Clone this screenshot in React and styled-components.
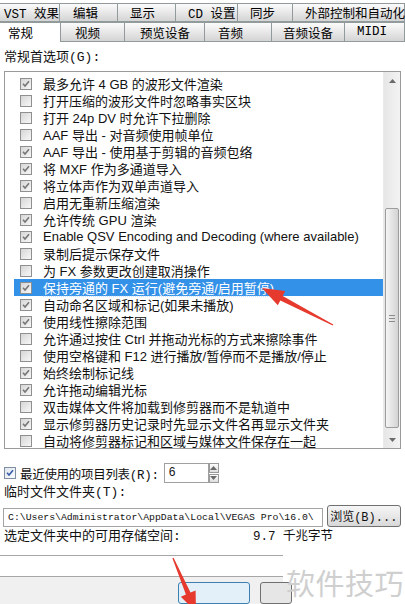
import styled, { createGlobalStyle } from "styled-components";

const GlobalStyle = createGlobalStyle`
  html, body {
    margin: 0;
    padding: 0;
    background: #fff;
  }
`;

const UI_FONT = `"Liberation Mono", "Noto Sans CJK SC", monospace`;
const LIST_FONT = `"Liberation Sans", "Noto Sans CJK SC", sans-serif`;

const backTabs = [
  { label: "VST 效果", w: 60, pad: 4 },
  { label: "编辑", w: 58, pad: 13 },
  { label: "显示", w: 58, pad: 12 },
  { label: "CD 设置", w: 62, pad: 12 },
  { label: "同步", w: 55, pad: 12 },
  { label: "外部控制和自动化", w: 112, pad: 12 },
];

const frontTabs = [
  { label: "常规", w: 61, pad: 8, active: true },
  { label: "视频", w: 64, pad: 14 },
  { label: "预览设备", w: 80, pad: 15 },
  { label: "音频", w: 67, pad: 13 },
  { label: "音频设备", w: 73, pad: 11 },
  { label: "MIDI", w: 60, pad: 12 },
];

const prefs = [
  ["最多允许 4 GB 的波形文件渲染", true],
  ["打开压缩的波形文件时忽略事实区块", false],
  ["打开 24p DV 时允许下拉删除", false],
  ["AAF 导出 - 对音频使用帧单位", false],
  ["AAF 导出 - 使用基于剪辑的音频包络", true],
  ["将 MXF 作为多通道导入", true],
  ["将立体声作为双单声道导入", true],
  ["启用无重新压缩渲染", false],
  ["允许传统 GPU 渲染", true],
  ["Enable QSV Encoding and Decoding (where available)", true],
  ["录制后提示保存文件", false],
  ["为 FX 参数更改创建取消操作", false],
  ["保持旁通的 FX 运行(避免旁通/启用暂停)", true, true],
  ["自动命名区域和标记(如果未播放)", true],
  ["使用线性擦除范围", true],
  ["允许通过按住 Ctrl 并拖动光标的方式来擦除事件", false],
  ["使用空格键和 F12 进行播放/暂停而不是播放/停止", false],
  ["始终绘制标记线", true],
  ["允许拖动编辑光标", true],
  ["双击媒体文件将加载到修剪器而不是轨道中", false],
  ["显示修剪器历史记录时先显示文件名再显示文件夹", true],
  ["自动将修剪器标记和区域与媒体文件保存在一起", false],
];

const Page = styled.div`
  position: relative;
  width: 405px;
  height: 604px;
  overflow: hidden;
  background: #fff;
  font-family: ${UI_FONT};
  font-size: 13px;
  color: #111;
`;

const TabStrip = styled.div`
  padding-top: 3px;
`;

const TabRow = styled.div`
  display: flex;
  height: ${(p) => p.h}px;
`;

const Tab = styled.div`
  box-sizing: border-box;
  width: ${(p) => p.w}px;
  padding-left: ${(p) => p.pad}px;
  display: flex;
  align-items: center;
  font-size: 12.5px;
  white-space: nowrap;
  border: 1px solid #919b9c;
  border-left: none;
  border-bottom: ${(p) => (p.active ? "none" : "1px solid #919b9c")};
  background: ${(p) =>
    p.active ? "#fff" : "linear-gradient(#fbfbfb, #e4e4e4 60%, #d4d4d4)"};
  color: #000;
`;

const Content = styled.div`
  padding: 8px 4px 0 4px;
`;

const Caption = styled.div`
  height: 16px;
  line-height: 16px;
  font-size: 13px;
  margin-bottom: ${(p) => p.mb || 0}px;
  margin-top: ${(p) => p.mt || 0}px;
`;

const ListBox = styled.div`
  box-sizing: border-box;
  display: flex;
  width: 397px;
  height: 378px;
  border: 1px solid #9a9a9a;
  background: #fff;
`;

const ListBody = styled.div`
  flex: 1;
  padding-top: 3px;
  overflow: hidden;
`;

const Row = styled.div`
  display: flex;
  align-items: center;
  height: 17px;
  margin-left: 9px;
  padding-left: 6px;
  font-family: ${LIST_FONT};
  font-size: 13px;
  white-space: nowrap;
  background: ${(p) => (p.selected ? "#3391e8" : "transparent")};
  color: ${(p) => (p.selected ? "#fff" : "#111")};
`;

const Label = styled.span`
  margin-left: 11px;
  text-decoration: ${(p) => (p.selected ? "underline dotted #cfe4fb" : "none")};
  text-underline-offset: 3px;
`;

const Box = styled.span`
  box-sizing: border-box;
  position: relative;
  flex: none;
  width: 12px;
  height: 12px;
  border: 1px solid #8f8f8f;
  background: linear-gradient(135deg, #d6d6d6, #f7f7f7);
`;

const Tick = ({ color = "#777" }) => (
  <svg width="10" height="10" viewBox="0 0 10 10" style={{ position: "absolute", left: 0, top: 0 }}>
    <path d="M2 4.8 L4 7 L8 2.2" fill="none" stroke={color} strokeWidth="1.6" />
  </svg>
);

const Scrollbar = styled.div`
  display: flex;
  flex-direction: column;
  width: 16px;
  background: linear-gradient(90deg, #e6e6e6, #f3f3f3);
  border-left: 1px solid #eaeaea;
`;

const ScrollButton = styled.div`
  height: 17px;
  display: flex;
  align-items: center;
  justify-content: center;
`;

const Track = styled.div`
  flex: 1;
`;

const Thumb = styled.div`
  box-sizing: border-box;
  margin: ${(p) => p.top}px 1px 0 1px;
  height: ${(p) => p.h}px;
  border: 1px solid #9c9c9c;
  border-radius: 2px;
  background: linear-gradient(90deg, #f5f5f5, #e2e2e2 55%, #d3d3d3);
  display: flex;
  align-items: center;
  justify-content: center;
`;

const Grip = styled.div`
  width: 6px;
  height: 7px;
  background: repeating-linear-gradient(#8c8c8c 0 1px, transparent 1px 3px);
`;

const Arrow = ({ up }) => (
  <svg width="7" height="4" viewBox="0 0 7 4">
    <path d={up ? "M0 4 L3.5 0 L7 4 Z" : "M0 0 L3.5 4 L7 0 Z"} fill="#6a6a6a" />
  </svg>
);

const RecentRow = styled.div`
  display: flex;
  align-items: center;
  height: 20px;
  margin-top: 14px;
  font-size: 12.5px;
  letter-spacing: -0.3px;
`;

const SmallBox = styled(Box)`
  width: 12px;
  height: 12px;
  margin-right: 4px;
  border-color: #7f8ea0;
  background: linear-gradient(135deg, #dfe6ee, #fafcff);
`;

const NumberField = styled.div`
  box-sizing: border-box;
  width: 45px;
  height: 20px;
  margin-left: 5px;
  padding: 1px 4px;
  border: 1px solid #a0a0a0;
  font-size: 12px;
  line-height: 16px;
  letter-spacing: 0;
`;

const Spinner = styled.div`
  display: flex;
  flex-direction: column;
  width: 10px;
  height: 20px;
  gap: 1px;
`;

const SpinButton = styled.div`
  flex: 1;
  border: 1px solid #9a9a9a;
  background: linear-gradient(#fdfdfd, #dedede);
  display: flex;
  align-items: center;
  justify-content: center;
`;

const PathRow = styled.div`
  display: flex;
  align-items: flex-end;
  height: 22px;
  margin-top: 4px;
  margin-left: -1px;
`;

const PathField = styled.div`
  box-sizing: border-box;
  width: 322px;
  height: 19px;
  padding-left: 4px;
  border: 1px solid #a4a4a4;
  overflow: hidden;
  white-space: nowrap;
  font-family: ${UI_FONT};
  font-size: 9.8px;
  line-height: 17px;
`;

const Button = styled.div`
  box-sizing: border-box;
  width: 75px;
  height: 22px;
  margin-left: 4px;
  border: 1px solid #707070;
  border-radius: 3px;
  background: linear-gradient(#f6f6f6, #e8e8e8 50%, #d8d8d8);
  display: flex;
  align-items: center;
  justify-content: center;
  font-size: 12px;
  align-self: flex-start;
`;

const FreeSpace = styled.div`
  display: flex;
  height: 16px;
  line-height: 16px;
  margin-top: 2px;
  font-size: 13px;
`;

const FreeValue = styled.span`
  margin-left: auto;
  margin-right: 68px;
  font-size: 12.5px;
`;

const Footer = styled.div`
  display: flex;
  margin-top: 10px;
  height: 49px;
`;

const FooterLeft = styled.div`
  display: flex;
  flex-direction: column;
  width: 283px;
`;

const Divider = styled.div`
  height: 38px;
  border-top: 1px solid #a6a6a6;
  border-bottom: 1px solid #a6a6a6;
`;

const ButtonBar = styled.div`
  flex: 1;
  display: flex;
  gap: 10px;
  padding: 5px 0 0 178px;
  background: #f0f0f0;
`;

const DialogButton = styled.div`
  flex: none;
  width: ${(p) => p.w}px;
  height: 20px;
  border: 1px solid ${(p) => (p.primary ? "#3c7fb1" : "#707070")};
  border-radius: 3px;
  background: ${(p) => (p.primary ? "#e3f0fa" : "#e6e6e6")};
`;

const Watermark = styled.div`
  flex: 1;
  padding: 6px 0 0 3px;
  font-family: "Noto Sans CJK SC", sans-serif;
  font-size: 29px;
  letter-spacing: 0.5px;
  color: #cfcfcf;
  white-space: nowrap;
`;

const Callouts = styled.svg`
  position: absolute;
  left: 0;
  top: 0;
  pointer-events: none;
`;

export default function App() {
  return (
    <Page>
      <GlobalStyle />
      <TabStrip>
        <TabRow h={19}>
          {backTabs.map((t) => (
            <Tab key={t.label} w={t.w} pad={t.pad}>
              {t.label}
            </Tab>
          ))}
        </TabRow>
        <TabRow h={20}>
          {frontTabs.map((t) => (
            <Tab key={t.label} w={t.w} pad={t.pad} active={t.active}>
              {t.label}
            </Tab>
          ))}
        </TabRow>
      </TabStrip>

      <Content>
        <Caption mb={5}>常规首选项(G):</Caption>
        <ListBox>
          <ListBody>
            {prefs.map(([text, checked, selected]) => (
              <Row key={text} selected={selected}>
                <Box>{checked && <Tick />}</Box>
                <Label selected={selected}>{text}</Label>
              </Row>
            ))}
          </ListBody>
          <Scrollbar>
            <ScrollButton>
              <Arrow up />
            </ScrollButton>
            <Track>
              <Thumb top={119} h={220}>
                <Grip />
              </Thumb>
            </Track>
            <ScrollButton>
              <Arrow />
            </ScrollButton>
          </Scrollbar>
        </ListBox>

        <RecentRow>
          <SmallBox>
            <Tick color="#3a5fa8" />
          </SmallBox>
          最近使用的项目列表(R):
          <NumberField>6</NumberField>
          <Spinner>
            <SpinButton>
              <Arrow up />
            </SpinButton>
            <SpinButton>
              <Arrow />
            </SpinButton>
          </Spinner>
        </RecentRow>

        <Caption mt={2}>临时文件文件夹(T):</Caption>
        <PathRow>
          <PathField>C:\Users\Administrator\AppData\Local\VEGAS Pro\16.0\</PathField>
          <Button>浏览(B)...</Button>
        </PathRow>

        <FreeSpace>
          选定文件夹中的可用存储空间:
          <FreeValue>9.7 千兆字节</FreeValue>
        </FreeSpace>
      </Content>

      <Footer>
        <FooterLeft>
          <Divider />
          <ButtonBar>
            <DialogButton primary w={70} />
            <DialogButton w={30} />
          </ButtonBar>
        </FooterLeft>
        <Watermark>软件技巧</Watermark>
      </Footer>

      <Callouts width="405" height="604" viewBox="0 0 405 604">
        <polygon
          points="333.3,324.4 282.7,296 285.2,291.1 262,288 277.8,305.3 280.3,300.4 332.7,325.6"
          fill="#e63a2e"
        />
        <polygon
          points="173.6,557.7 190.5,592.6 195.6,590.5 196,612 180.8,596.7 185.9,594.6 172.4,558.3"
          fill="#e63a2e"
        />
      </Callouts>
    </Page>
  );
}
